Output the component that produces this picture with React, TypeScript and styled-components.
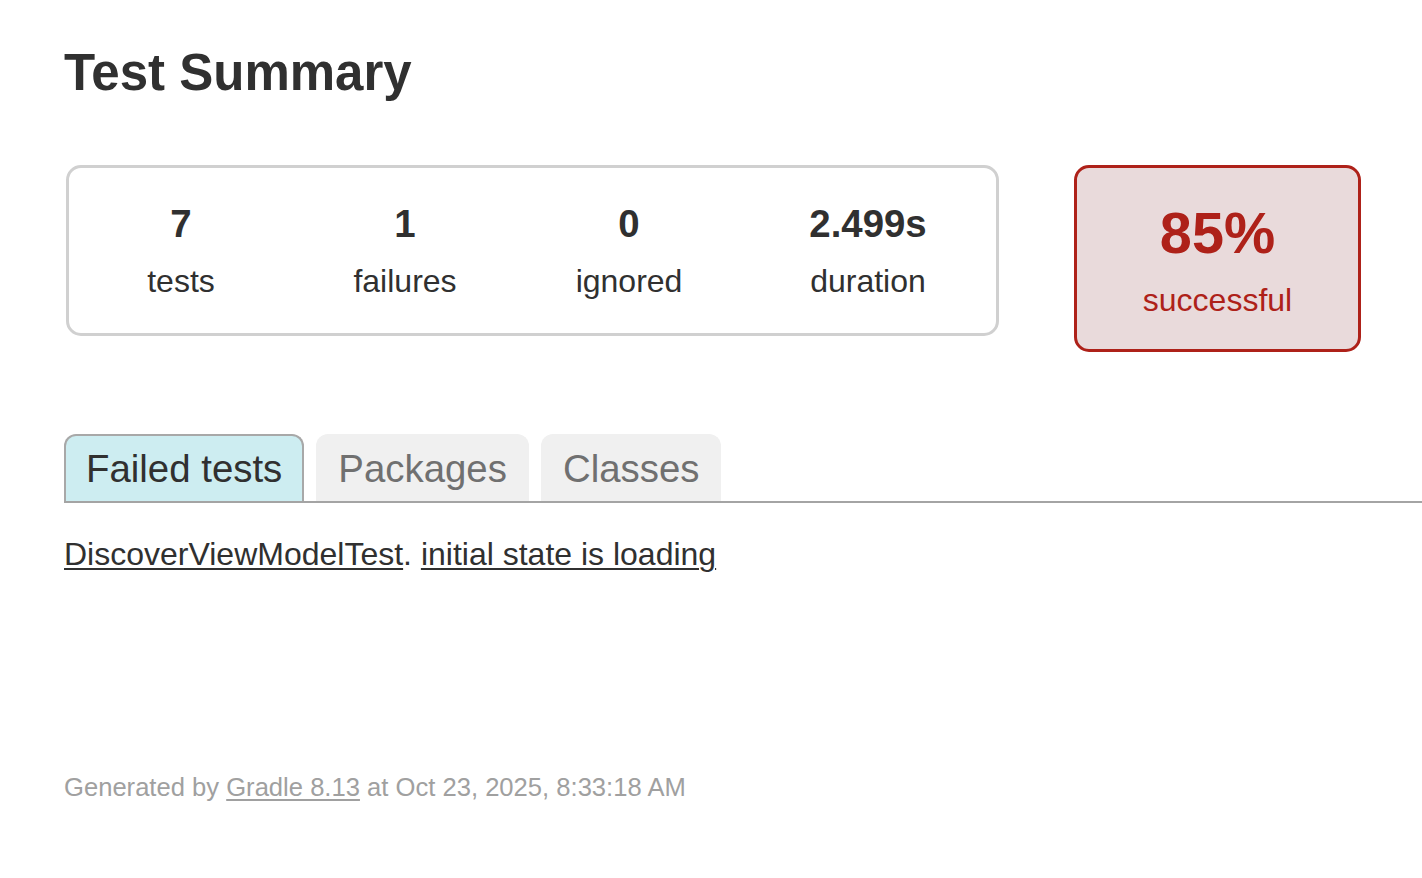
import styled, { createGlobalStyle } from "styled-components";

const GlobalStyle = createGlobalStyle`
  html, body {
    margin: 0;
    padding: 0;
    background: #ffffff;
  }
  body {
    font-family: "Liberation Sans", Arial, Helvetica, sans-serif;
    font-size: 32px;
    color: #303030;
  }
`;

const Content = styled.div`
  padding: 0 0 60px 64px;
`;

const Title = styled.h1`
  margin: 43px 0 0;
  font-size: 51px;
  line-height: 60px;
  font-weight: bold;
  color: #303030;
`;

const SummaryRow = styled.div`
  display: flex;
  align-items: flex-start;
  margin-top: 62px;
  margin-left: 2px;
`;

const SummaryGroup = styled.div`
  display: flex;
  border: 3px solid #d0d0d0;
  border-radius: 15px;
  width: 927px;
`;

const InfoBox = styled.div<{ $wide?: boolean }>`
  width: ${(p) => (p.$wide ? "254px" : "224px")};
  padding: 34px 0 33px;
  text-align: center;
`;

const Counter = styled.div`
  font-size: 38.4px;
  line-height: 44px;
  font-weight: bold;
  margin-bottom: 17px;
`;

const Label = styled.div`
  font-size: 32px;
  line-height: 37px;
`;

const SuccessBox = styled.div`
  margin-left: 75px;
  width: 281px;
  padding: 32px 0 30px;
  border: 3px solid #ae2119;
  border-radius: 15px;
  background: #e9dadb;
  color: #ae2119;
  text-align: center;
`;

const Percent = styled.div`
  font-size: 57.6px;
  line-height: 66px;
  font-weight: bold;
  margin-bottom: 16px;
`;

const TabBar = styled.ul`
  display: flex;
  gap: 12px;
  list-style: none;
  margin: 82px 0 0;
  padding: 0;
  border-bottom: 2px solid #a4a4a4;
`;

const Tab = styled.li<{ $selected?: boolean }>`
  padding: 11px 20px 10px;
  font-size: 38.4px;
  line-height: 44px;
  border: 2px solid ${(p) => (p.$selected ? "#a8a8a8" : "#f0f0f0")};
  border-bottom: none;
  border-radius: 12px 12px 0 0;
  background: ${(p) => (p.$selected ? "#cdedf1" : "#f0f0f0")};
  color: ${(p) => (p.$selected ? "#303030" : "#707070")};
`;

const FailedList = styled.div`
  margin-top: 33px;
  font-size: 32px;
  line-height: 37px;
`;

const TestLink = styled.a`
  color: #303030;
  text-decoration: underline;
  text-decoration-thickness: 2px;
  text-underline-offset: 3px;
`;

const Footer = styled.div`
  margin-top: 199px;
  font-size: 25.6px;
  line-height: 30px;
  color: #a0a0a0;
  white-space: nowrap;
`;

const FooterLink = styled.a`
  color: #a0a0a0;
  text-decoration: underline;
  text-decoration-thickness: 2px;
  text-underline-offset: 3px;
`;

const counters = [
  { value: "7", label: "tests" },
  { value: "1", label: "failures" },
  { value: "0", label: "ignored" },
  { value: "2.499s", label: "duration", wide: true },
];

const tabs = ["Failed tests", "Packages", "Classes"];

export default function App() {
  return (
    <>
      <GlobalStyle />
      <Content>
        <Title>Test Summary</Title>

        <SummaryRow>
          <SummaryGroup>
            {counters.map((c) => (
              <InfoBox key={c.label} $wide={c.wide}>
                <Counter>{c.value}</Counter>
                <Label>{c.label}</Label>
              </InfoBox>
            ))}
          </SummaryGroup>
          <SuccessBox>
            <Percent>85%</Percent>
            <Label>successful</Label>
          </SuccessBox>
        </SummaryRow>

        <TabBar>
          {tabs.map((t, i) => (
            <Tab key={t} $selected={i === 0}>
              {t}
            </Tab>
          ))}
        </TabBar>

        <FailedList>
          <TestLink href="#">DiscoverViewModelTest</TestLink>.{" "}
          <TestLink href="#">initial state is loading</TestLink>
        </FailedList>

        <Footer>
          Generated by <FooterLink href="#">Gradle 8.13</FooterLink> at Oct 23,
          2025, 8:33:18 AM
        </Footer>
      </Content>
    </>
  );
}
